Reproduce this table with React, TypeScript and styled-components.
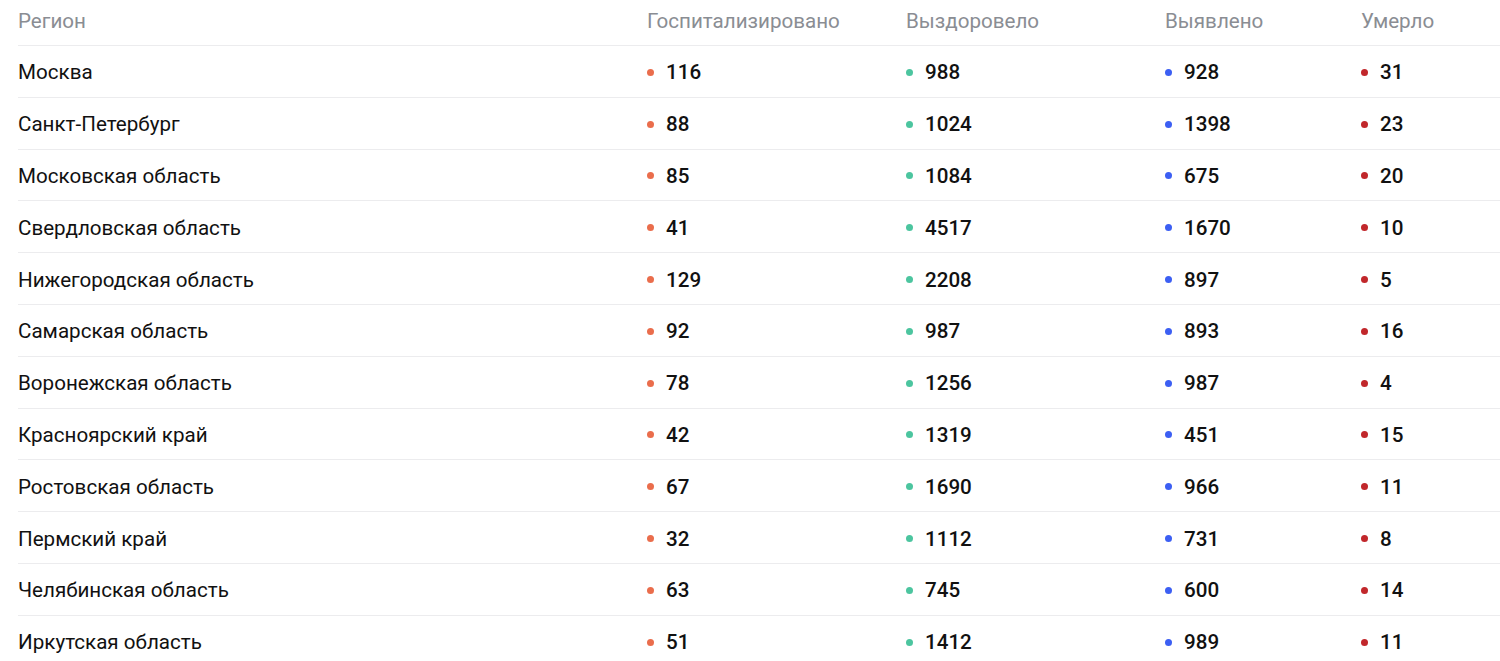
import React from "react";
import styled, { createGlobalStyle } from "styled-components";

const GlobalStyle = createGlobalStyle`
  html, body {
    margin: 0;
    padding: 0;
    background: #ffffff;
    font-family: Roboto, "Noto Sans", Arial, sans-serif;
    overflow: hidden;
  }
`;

type Row = {
  region: string;
  hospital: number;
  recovered: number;
  detected: number;
  died: number;
};

const rows: Row[] = [
  { region: "Москва", hospital: 116, recovered: 988, detected: 928, died: 31 },
  { region: "Санкт-Петербург", hospital: 88, recovered: 1024, detected: 1398, died: 23 },
  { region: "Московская область", hospital: 85, recovered: 1084, detected: 675, died: 20 },
  { region: "Свердловская область", hospital: 41, recovered: 4517, detected: 1670, died: 10 },
  { region: "Нижегородская область", hospital: 129, recovered: 2208, detected: 897, died: 5 },
  { region: "Самарская область", hospital: 92, recovered: 987, detected: 893, died: 16 },
  { region: "Воронежская область", hospital: 78, recovered: 1256, detected: 987, died: 4 },
  { region: "Красноярский край", hospital: 42, recovered: 1319, detected: 451, died: 15 },
  { region: "Ростовская область", hospital: 67, recovered: 1690, detected: 966, died: 11 },
  { region: "Пермский край", hospital: 32, recovered: 1112, detected: 731, died: 8 },
  { region: "Челябинская область", hospital: 63, recovered: 745, detected: 600, died: 14 },
  { region: "Иркутская область", hospital: 51, recovered: 1412, detected: 989, died: 11 },
];

const colors = {
  hospital: "#ea6d4c",
  recovered: "#4cc59f",
  detected: "#3c5ff3",
  died: "#c1272b",
};

const Table = styled.div`
  padding-left: 18px;
  display: flex;
  flex-direction: column;
`;

const Line = styled.div`
  display: grid;
  grid-template-columns: 629px 259px 259px 196px 1fr;
  align-items: center;
  height: 50.8px;
  border-bottom: 1px solid #ececee;
`;

const HeadLine = styled(Line)`
  height: 45px;
  align-items: start;
`;

const HeadCell = styled.div`
  color: #8a8d93;
  font-size: 20.6px;
  line-height: 24px;
  padding-top: 9px;
`;

const RegionCell = styled.div`
  color: #111111;
  font-size: 20.6px;
  line-height: 24px;
  padding-top: 2px;
`;

const NumCell = styled.div`
  display: flex;
  align-items: center;
  gap: 12px;
  padding-top: 2px;
  color: #111111;
  font-size: 20.6px;
  font-weight: 500;
  line-height: 24px;
`;

const Dot = styled.span<{ $color: string }>`
  width: 7px;
  height: 7px;
  border-radius: 50%;
  background: ${(p) => p.$color};
  flex: none;
`;

const Value: React.FC<{ color: string; value: number }> = ({ color, value }) => (
  <NumCell>
    <Dot $color={color} />
    {value}
  </NumCell>
);

const App: React.FC = () => {
  return (
    <>
      <GlobalStyle />
      <Table>
        <HeadLine>
          <HeadCell>Регион</HeadCell>
          <HeadCell>Госпитализировано</HeadCell>
          <HeadCell>Выздоровело</HeadCell>
          <HeadCell>Выявлено</HeadCell>
          <HeadCell>Умерло</HeadCell>
        </HeadLine>
        {rows.map((r) => (
          <Line key={r.region}>
            <RegionCell>{r.region}</RegionCell>
            <Value color={colors.hospital} value={r.hospital} />
            <Value color={colors.recovered} value={r.recovered} />
            <Value color={colors.detected} value={r.detected} />
            <Value color={colors.died} value={r.died} />
          </Line>
        ))}
      </Table>
    </>
  );
};

export default App;
